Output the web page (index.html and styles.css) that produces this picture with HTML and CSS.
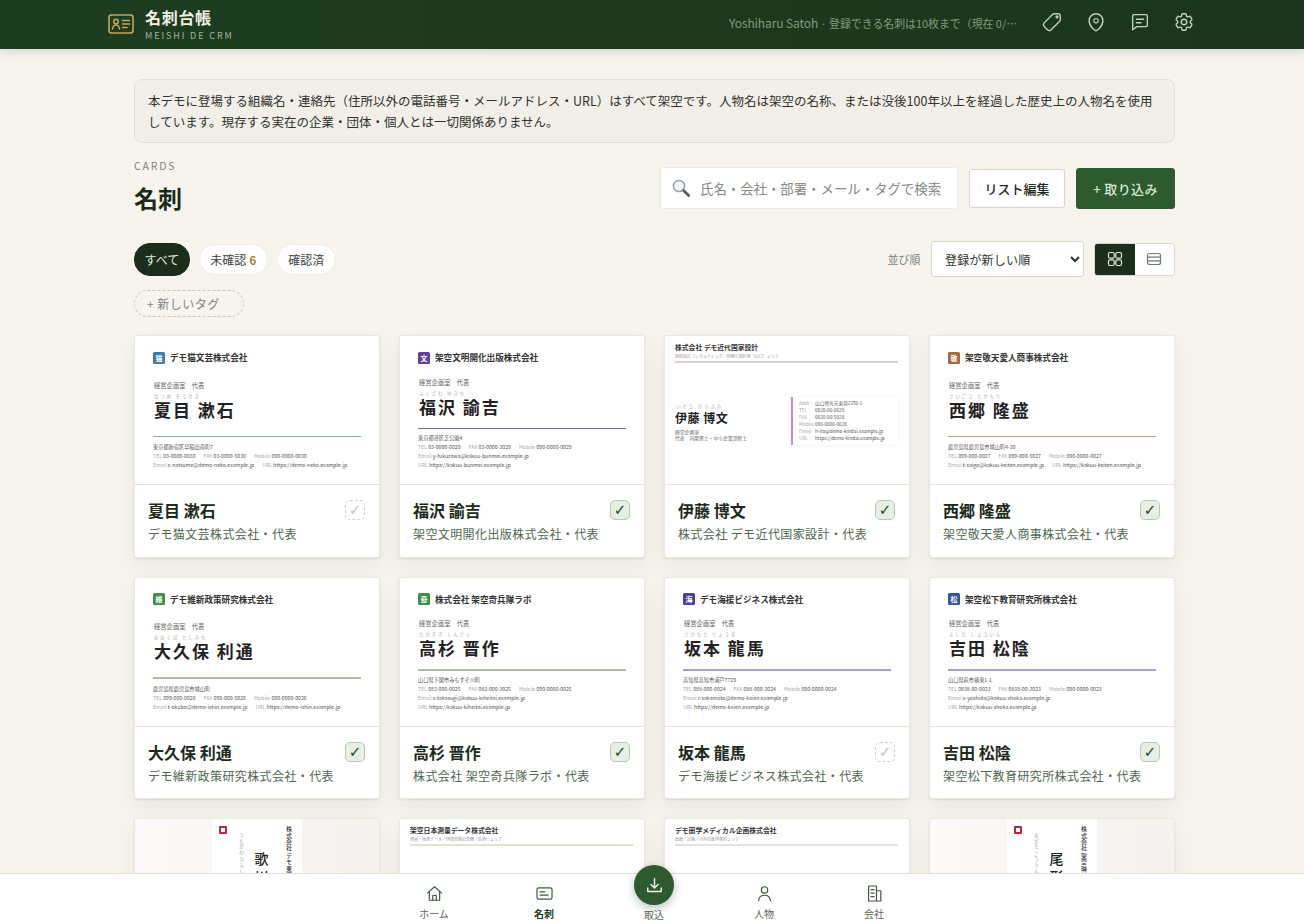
FILE: index.html
```html
<!DOCTYPE html>
<html lang="ja">
<head>
    <meta charset="UTF-8">
    <meta name="viewport" content="width=device-width, initial-scale=1.0">
    <title>名刺台帳</title>
    <link rel="stylesheet" href="styles.css">
</head>
<body>
<div class="app">

    <!-- Header -->
    <header class="topbar">
        <div class="brand">
            <svg class="brand-icon" viewBox="0 0 26 20" fill="none" stroke="currentColor" stroke-width="1.6" stroke-linecap="round" stroke-linejoin="round">
                <rect x="1" y="1" width="24" height="18" rx="2.5"/>
                <circle cx="8" cy="7.5" r="2.3"/>
                <path d="M4.5 15c.3-2.6 1.8-4 3.5-4s3.200 1.400 3.500 4"/>
                <path d="M14.500 6.500h7M14.500 10h7M14.500 13.500h4.500"/>
            </svg>
            <div>
                <div class="brand-name">名刺台帳</div>
                <div class="brand-sub">MEISHI DE CRM</div>
            </div>
        </div>
        <div class="user-note"><span class="user-name">Yoshiharu Satoh</span> · 登録できる名刺は10枚まで（現在 0/10枚）</div>
        <nav class="top-icons">
            <svg viewBox="0 0 24 24"><g transform="matrix(-1 0 0 1 24 0)"><path d="M9.568 3H5.250A2.250 2.250 0 0 0 3 5.250v4.318c0 .597.237 1.170.659 1.591l9.581 9.581c.699.699 1.780.872 2.607.33a18.095 18.095 0 0 0 5.223-5.223c.542-.827.369-1.908-.33-2.607L11.160 3.660A2.250 2.250 0 0 0 9.568 3Z"/><circle cx="6.500" cy="6.500" r="1"/></g></svg>
            <svg viewBox="0 0 24 24"><path d="M15 10.500a3 3 0 1 1-6 0 3 3 0 0 1 6 0Z" transform="translate(2.400 2.100) scale(.8)"/><path d="M19.500 10.500c0 7.142-7.500 11.250-7.500 11.250S4.500 17.642 4.500 10.500a7.500 7.500 0 1 1 15 0Z"/></svg>
            <svg viewBox="0 0 24 24"><path d="M5.500 4h13A1.500 1.500 0 0 1 20 5.500v10a1.500 1.500 0 0 1-1.500 1.500H8.500L4 20.500v-15A1.500 1.500 0 0 1 5.500 4Z"/><path d="M8 9h8M8 12.800h5"/></svg>
            <svg viewBox="0 0 24 24"><path d="M9.594 3.940c.09-.542.56-.94 1.110-.94h2.593c.55 0 1.020.398 1.110.94l.213 1.281c.063.374.313.686.645.87.074.04.147.083.22.127.325.196.72.257 1.075.124l1.217-.456a1.125 1.125 0 0 1 1.370.49l1.296 2.247a1.125 1.125 0 0 1-.26 1.431l-1.003.827c-.293.241-.438.613-.43.992a7.723 7.723 0 0 1 0 .255c-.008.378.137.75.43.991l1.004.827c.424.35.534.955.26 1.430l-1.298 2.247a1.125 1.125 0 0 1-1.369.491l-1.217-.456c-.355-.133-.75-.072-1.076.124a6.470 6.470 0 0 1-.22.128c-.331.183-.581.495-.644.869l-.213 1.281c-.09.543-.56.94-1.110.94h-2.594c-.55 0-1.019-.398-1.110-.94l-.213-1.281c-.062-.374-.312-.686-.644-.87a6.520 6.520 0 0 1-.22-.127c-.325-.196-.72-.257-1.076-.124l-1.217.456a1.125 1.125 0 0 1-1.369-.49l-1.297-2.247a1.125 1.125 0 0 1 .26-1.431l1.004-.827c.292-.24.437-.613.43-.991a6.932 6.932 0 0 1 0-.255c.007-.38-.138-.751-.43-.992l-1.004-.827a1.125 1.125 0 0 1-.26-1.430l1.297-2.247a1.125 1.125 0 0 1 1.370-.491l1.216.456c.356.133.751.072 1.076-.124.072-.044.146-.086.22-.128.332-.183.582-.495.644-.869l.214-1.280Z"/><circle cx="12" cy="12" r="3"/></svg>
        </nav>
    </header>

    <main class="content">
        <div class="notice">本デモに登場する組織名・連絡先（住所以外の電話番号・メールアドレス・URL）はすべて架空です。人物名は架空の名称、または没後100年以上を経過した歴史上の人物名を使用しています。現存する実在の企業・団体・個人とは一切関係ありません。</div>

        <!-- Title and actions -->
        <div class="page-head">
            <div>
                <div class="eyebrow">CARDS</div>
                <h1>名刺</h1>
            </div>
            <div class="actions">
                <label class="search">
                    <svg viewBox="0 0 20 20"><circle cx="8" cy="8" r="5.600" fill="#f1f3f4" stroke="#9a9da0" stroke-width="1.500"/><path d="M12.500 12.500l5.200 5" stroke="#55585b" stroke-width="2.600" stroke-linecap="round"/></svg>
                    <input type="text" placeholder="氏名・会社・部署・メール・タグで検索">
                </label>
                <button class="btn">リスト編集</button>
                <button class="btn btn-primary">+ 取り込み</button>
            </div>
        </div>

        <!-- Filters -->
        <div class="filters">
            <div class="filter-left">
                <div class="pills">
                    <span class="pill pill-active">すべて</span>
                    <span class="pill">未確認 <b class="count">6</b></span>
                    <span class="pill">確認済</span>
                </div>
                <span class="new-tag">+ 新しいタグ</span>
            </div>
            <div class="filter-right">
                <span class="sort-label">並び順</span>
                <select class="sort">
                    <option>登録が新しい順</option>
                </select>
                <div class="view-toggle">
                    <span class="view-btn view-active"><svg viewBox="0 0 16 16"><rect x="1.500" y="1.500" width="5.700" height="5.700" rx="1.500"/><rect x="8.800" y="1.500" width="5.700" height="5.700" rx="1.500"/><rect x="1.500" y="8.800" width="5.700" height="5.700" rx="1.500"/><rect x="8.800" y="8.800" width="5.700" height="5.700" rx="1.500"/></svg></span>
                    <span class="view-btn"><svg viewBox="0 0 16 16"><rect x="1.500" y="2.500" width="13" height="11" rx="2"/><path d="M1.500 6.200h13M1.500 9.800h13"/></svg></span>
                </div>
            </div>
        </div>

        <div class="card-grid">

            <!-- Row 1 -->
            <article class="card">
                <div class="preview biz">
                    <div class="biz-head"><span class="biz-logo logo-blue">猫</span>デモ猫文芸株式会社</div>
                    <div class="biz-body">
                        <div class="biz-title">経営企画室　代表</div>
                        <div class="biz-kana">なつめ そうせき</div>
                        <div class="biz-name">夏目 漱石</div>
                        <div class="biz-line line-blue"></div>
                        <div class="biz-addr">東京都新宿区早稲田南町7</div>
                        <div class="biz-row"><span><i>TEL</i> 03-0000-0030</span><span><i>FAX</i> 03-0000-5030</span><span><i>Mobile</i> 090-0000-0030</span></div>
                        <div class="biz-row"><span><i>Email</i> s-natsume@demo-neko.example.jp</span><span><i>URL</i> https://demo-neko.example.jp</span></div>
                    </div>
                </div>
                <div class="meta">
                    <div class="meta-top"><span class="person">夏目 漱石</span><span class="check check-off">✓</span></div>
                    <div class="org">デモ猫文芸株式会社・代表</div>
                </div>
            </article>

            <article class="card">
                <div class="preview biz biz-tight">
                    <div class="biz-head"><span class="biz-logo logo-purple">文</span>架空文明開化出版株式会社</div>
                    <div class="biz-body">
                        <div class="biz-title">経営企画室　代表</div>
                        <div class="biz-kana">ふくざわ ゆきち</div>
                        <div class="biz-name">福沢 諭吉</div>
                        <div class="biz-line line-purple"></div>
                        <div class="biz-addr">東京都港区芝公園4</div>
                        <div class="biz-row"><span><i>TEL</i> 03-0000-0029</span><span><i>FAX</i> 03-0000-3029</span><span><i>Mobile</i> 090-0000-0029</span></div>
                        <div class="biz-row"><span><i>Email</i> y-fukuzawa@kakuu-bunmei.example.jp</span></div>
                        <div class="biz-row"><span><i>URL</i> https://kakuu-bunmei.example.jp</span></div>
                    </div>
                </div>
                <div class="meta">
                    <div class="meta-top"><span class="person">福沢 諭吉</span><span class="check">✓</span></div>
                    <div class="org">架空文明開化出版株式会社・代表</div>
                </div>
            </article>

            <article class="card">
                <div class="preview modern">
                    <div class="modern-org">株式会社 デモ近代国家設計</div>
                    <div class="modern-sub">制度設計コンサルティング／伊藤公資料室（山口）ミリア</div>
                    <div class="modern-line line-pink"></div>
                    <div class="modern-body">
                        <div class="modern-person">
                            <div class="biz-kana">いとう ひろぶみ</div>
                            <div class="modern-name">伊藤 博文</div>
                            <div class="modern-dept">経営企画室</div>
                            <div class="modern-dept">代表　内閣書士・中小企業診断士</div>
                        </div>
                        <div class="modern-box">
                            <div><i>Addr</i>山口県光市束荷2250-1</div>
                            <div><i>TEL</i>0820-00-0028</div>
                            <div><i>FAX</i>0820-00-5028</div>
                            <div><i>Mobile</i>090-0000-0028</div>
                            <div><i>Email</i>h-ito@demo-kindai.example.jp</div>
                            <div><i>URL</i>https://demo-kindai.example.jp</div>
                        </div>
                    </div>
                </div>
                <div class="meta">
                    <div class="meta-top"><span class="person">伊藤 博文</span><span class="check">✓</span></div>
                    <div class="org">株式会社 デモ近代国家設計・代表</div>
                </div>
            </article>

            <article class="card">
                <div class="preview biz">
                    <div class="biz-head"><span class="biz-logo logo-brown">敬</span>架空敬天愛人商事株式会社</div>
                    <div class="biz-body">
                        <div class="biz-title">経営企画室　代表</div>
                        <div class="biz-kana">さいごう たかもり</div>
                        <div class="biz-name">西郷 隆盛</div>
                        <div class="biz-line line-brown"></div>
                        <div class="biz-addr">鹿児島県鹿児島市城山町4-30</div>
                        <div class="biz-row"><span><i>TEL</i> 099-000-0027</span><span><i>FAX</i> 099-000-5027</span><span><i>Mobile</i> 090-0000-0027</span></div>
                        <div class="biz-row"><span><i>Email</i> t-saigo@kakuu-keiten.example.jp</span><span><i>URL</i> https://kakuu-keiten.example.jp</span></div>
                    </div>
                </div>
                <div class="meta">
                    <div class="meta-top"><span class="person">西郷 隆盛</span><span class="check">✓</span></div>
                    <div class="org">架空敬天愛人商事株式会社・代表</div>
                </div>
            </article>

            <!-- Row 2 -->
            <article class="card">
                <div class="preview biz">
                    <div class="biz-head"><span class="biz-logo logo-green">維</span>デモ維新政策研究株式会社</div>
                    <div class="biz-body">
                        <div class="biz-title">経営企画室　代表</div>
                        <div class="biz-kana">おおくぼ としみち</div>
                        <div class="biz-name">大久保 利通</div>
                        <div class="biz-line line-green"></div>
                        <div class="biz-addr">鹿児島県鹿児島市城山町</div>
                        <div class="biz-row"><span><i>TEL</i> 099-000-0026</span><span><i>FAX</i> 099-000-5026</span><span><i>Mobile</i> 090-0000-0026</span></div>
                        <div class="biz-row"><span><i>Email</i> t-okubo@demo-ishin.example.jp</span><span><i>URL</i> https://demo-ishin.example.jp</span></div>
                    </div>
                </div>
                <div class="meta">
                    <div class="meta-top"><span class="person">大久保 利通</span><span class="check">✓</span></div>
                    <div class="org">デモ維新政策研究株式会社・代表</div>
                </div>
            </article>

            <article class="card">
                <div class="preview biz biz-tight">
                    <div class="biz-head"><span class="biz-logo logo-green">奇</span>株式会社 架空奇兵隊ラボ</div>
                    <div class="biz-body">
                        <div class="biz-title">経営企画室　代表</div>
                        <div class="biz-kana">たかすぎ しんさく</div>
                        <div class="biz-name">高杉 晋作</div>
                        <div class="biz-line line-green"></div>
                        <div class="biz-addr">山口県下関市みもすそ川町</div>
                        <div class="biz-row"><span><i>TEL</i> 083-000-0025</span><span><i>FAX</i> 083-000-3025</span><span><i>Mobile</i> 090-0000-0025</span></div>
                        <div class="biz-row"><span><i>Email</i> s-takasugi@kakuu-kiheitai.example.jp</span></div>
                        <div class="biz-row"><span><i>URL</i> https://kakuu-kiheitai.example.jp</span></div>
                    </div>
                </div>
                <div class="meta">
                    <div class="meta-top"><span class="person">高杉 晋作</span><span class="check">✓</span></div>
                    <div class="org">株式会社 架空奇兵隊ラボ・代表</div>
                </div>
            </article>

            <article class="card">
                <div class="preview biz biz-tight">
                    <div class="biz-head"><span class="biz-logo logo-indigo">海</span>デモ海援ビジネス株式会社</div>
                    <div class="biz-body">
                        <div class="biz-title">経営企画室　代表</div>
                        <div class="biz-kana">さかもと りょうま</div>
                        <div class="biz-name">坂本 龍馬</div>
                        <div class="biz-line line-indigo"></div>
                        <div class="biz-addr">高知県高知市浦戸7729</div>
                        <div class="biz-row"><span><i>TEL</i> 088-000-0024</span><span><i>FAX</i> 088-000-3024</span><span><i>Mobile</i> 090-0000-0024</span></div>
                        <div class="biz-row"><span><i>Email</i> r-sakamoto@demo-kaien.example.jp</span></div>
                        <div class="biz-row"><span><i>URL</i> https://demo-kaien.example.jp</span></div>
                    </div>
                </div>
                <div class="meta">
                    <div class="meta-top"><span class="person">坂本 龍馬</span><span class="check check-off">✓</span></div>
                    <div class="org">デモ海援ビジネス株式会社・代表</div>
                </div>
            </article>

            <article class="card">
                <div class="preview biz biz-tight">
                    <div class="biz-head"><span class="biz-logo logo-navy">松</span>架空松下教育研究所株式会社</div>
                    <div class="biz-body">
                        <div class="biz-title">経営企画室　代表</div>
                        <div class="biz-kana">よしだ しょういん</div>
                        <div class="biz-name">吉田 松陰</div>
                        <div class="biz-line line-indigo"></div>
                        <div class="biz-addr">山口県萩市椿東1-1</div>
                        <div class="biz-row"><span><i>TEL</i> 0838-00-0023</span><span><i>FAX</i> 0838-00-3023</span><span><i>Mobile</i> 090-0000-0023</span></div>
                        <div class="biz-row"><span><i>Email</i> s-yoshida@kakuu-shoka.example.jp</span></div>
                        <div class="biz-row"><span><i>URL</i> https://kakuu-shoka.example.jp</span></div>
                    </div>
                </div>
                <div class="meta">
                    <div class="meta-top"><span class="person">吉田 松陰</span><span class="check">✓</span></div>
                    <div class="org">架空松下教育研究所株式会社・代表</div>
                </div>
            </article>

            <!-- Row 3, runs under the bottom nav -->
            <article class="card">
                <div class="preview tate-wrap">
                    <div class="tate">
                        <span class="tate-logo"></span>
                        <div class="tate-org">株式会社 デモ東海道</div>
                        <div class="tate-name">歌川 広重</div>
                        <div class="tate-kana">うたがわ ひろしげ</div>
                    </div>
                </div>
            </article>

            <article class="card">
                <div class="preview modern">
                    <div class="modern-org">架空日本測量データ株式会社</div>
                    <div class="modern-sub">測量・地理データ／伊能忠敬記念館（佐原）ミリア</div>
                    <div class="modern-line line-olive"></div>
                </div>
            </article>

            <article class="card">
                <div class="preview modern">
                    <div class="modern-org">デモ蘭学メディカル企画株式会社</div>
                    <div class="modern-sub">医療・出版／小浜の医学資料ミリア</div>
                    <div class="modern-line line-stone"></div>
                </div>
            </article>

            <article class="card">
                <div class="preview tate-wrap">
                    <div class="tate">
                        <span class="tate-logo"></span>
                        <div class="tate-org">株式会社 架空琳派意匠</div>
                        <div class="tate-name">尾形 光琳</div>
                        <div class="tate-kana">おがた こうりん</div>
                    </div>
                </div>
            </article>
        </div>
    </main>

    <!-- Bottom nav -->
    <nav class="bottom-nav">
        <a class="nav-item">
            <svg viewBox="0 0 24 24"><path d="M3 11.500L12 3.500l9 8"/><path d="M5.500 9.500V20.500h13V9.500"/><path d="M9.800 20.500v-6h4.400v6"/></svg>
            <span>ホーム</span>
        </a>
        <a class="nav-item nav-active">
            <svg viewBox="0 0 24 24"><rect x="2.500" y="5" width="19" height="14" rx="2"/><path d="M6.500 10h6M6.500 14h10"/></svg>
            <span>名刺</span>
        </a>
        <a class="nav-item nav-fab">
            <span class="fab"><svg viewBox="0 0 24 24"><path d="M12 3.500v11.500M7.500 10.800L12 15.200l4.500-4.400"/><path d="M3.500 15v4.500h17V15"/></svg></span>
            <span>取込</span>
        </a>
        <a class="nav-item">
            <svg viewBox="0 0 24 24"><circle cx="12" cy="7.500" r="4"/><path d="M4.500 21c.5-4.500 3.500-6.800 7.500-6.800s7 2.300 7.500 6.800"/></svg>
            <span>人物</span>
        </a>
        <a class="nav-item">
            <svg viewBox="0 0 24 24"><path d="M4.500 2.500h10v19h-10z"/><path d="M14.500 8.500h5.500v13h-5.500"/><path d="M7.500 7h4M7.500 11.500h4M7.500 16h4"/></svg>
            <span>会社</span>
        </a>
    </nav>
</div>
</body>
</html>
```

FILE: styles.css
```css
* {
    box-sizing: border-box;
}

html, body {
    margin: 0;
    height: 100%;
}

body {
    font-family: "Noto Sans CJK JP", "Noto Sans", sans-serif;
    background-color: #f7f4ee;
    color: #1f2a1f;
}

.app {
    display: flex;
    flex-direction: column;
    height: 100vh;
    overflow: hidden;
}

/* Header */
.topbar {
    flex: none;
    height: 49px;
    display: flex;
    align-items: center;
    padding: 0 109px 0 108px;
    background: linear-gradient(90deg, #1e3d20, #1a351b);
    box-shadow: 0 2px 10px rgba(60, 50, 30, 0.18);
    position: relative;
    z-index: 2;
}

.brand {
    display: flex;
    align-items: center;
    gap: 11px;
}

.brand-icon {
    width: 26px;
    height: 20px;
    margin-bottom: 2px;
    color: #c4a55c;
}

.brand-name {
    color: #f3f1e6;
    font-size: 16px;
    font-weight: 700;
    letter-spacing: 0.7px;
    line-height: 18px;
    margin-bottom: 4px;
}

.brand-sub {
    color: #a5b5a0;
    font-size: 9px;
    letter-spacing: 1.900px;
    line-height: 12px;
}

.user-note {
    margin-left: auto;
    margin-bottom: 4px;
    width: 290px;
    color: #7f9b7f;
    font-size: 10.900px;
    white-space: nowrap;
    overflow: hidden;
    text-overflow: ellipsis;
}

.user-name {
    font-size: 12px;
    letter-spacing: -0.1px;
}

.top-icons {
    display: flex;
    gap: 22px;
    margin-left: 22px;
    margin-bottom: 5px;
}

.top-icons svg {
    width: 22px;
    height: 22px;
    fill: none;
    stroke: #c3d0be;
    stroke-width: 1.500;
    stroke-linejoin: round;
    stroke-linecap: round;
}

/* Content area */
.content {
    flex: 1;
    min-height: 0;
    overflow: hidden;
    padding: 30px 129px 0 134px;
}

.notice {
    background-color: #f2efe9;
    border: 1px solid #e2dfd7;
    border-radius: 8px;
    padding: 10px 20px 10px 13px;
    font-size: 12.500px;
    line-height: 21px;
    color: #2c332c;
    min-height: 64px;
}

.page-head {
    display: flex;
    justify-content: space-between;
    align-items: flex-start;
    margin-top: 15px;
}

.eyebrow {
    font-size: 10.500px;
    letter-spacing: 1.800px;
    line-height: 16px;
    color: #7c857a;
}

h1 {
    margin: 7px 0 0;
    font-size: 24px;
    line-height: 34px;
    font-weight: 700;
    color: #1c2a1c;
}

.actions {
    display: flex;
    align-items: center;
    gap: 11px;
    margin-top: 9px;
}

.search {
    width: 298px;
    height: 42px;
    display: flex;
    align-items: center;
    gap: 9px;
    padding: 0 14px 0 10px;
    background-color: #fff;
    border: 1px solid #eeebe4;
    border-radius: 3px;
}

.search svg {
    flex: none;
    width: 20px;
    height: 20px;
}

.search input {
    flex: 1;
    min-width: 0;
    border: 0;
    outline: 0;
    padding: 0;
    font-family: inherit;
    font-size: 13.400px;
    background: transparent;
}

.search input::placeholder {
    color: #858a85;
}

.btn {
    width: 96px;
    height: 39px;
    padding: 0;
    font-family: inherit;
    font-size: 13px;
    font-weight: 500;
    color: #1f2a1f;
    background-color: #fff;
    border: 1px solid #d9d6ce;
    border-radius: 3px;
}

.btn-primary {
    height: 41px;
    width: 99px;
    letter-spacing: 0.4px;
    color: #d9e5d3;
    background-color: #2d5a2f;
    border-color: #2d5a2f;
}

/* Filters */
.filters {
    display: flex;
    justify-content: space-between;
    align-items: flex-start;
    margin-top: 28px;
}

.pills {
    display: flex;
    align-items: center;
    gap: 9px;
    height: 33px;
}

.pill {
    height: 31px;
    padding: 0 10.500px;
    display: flex;
    align-items: center;
    gap: 3px;
    font-size: 12px;
    color: #3b443b;
    background-color: #fff;
    border: 1px solid #f0ede6;
    border-radius: 16px;
}

.pill-active {
    height: 33px;
    padding: 0 9.500px;
    color: #e6ebdf;
    background-color: #1a2e1b;
    border-color: #1a2e1b;
}

.count {
    color: #b57f35;
    font-weight: 700;
}

.new-tag {
    display: inline-flex;
    align-items: center;
    height: 27px;
    width: 110px;
    margin-top: 14px;
    padding: 0 12px;
    font-size: 12px;
    letter-spacing: 0.5px;
    color: #7f867f;
    border: 1px dashed #c9c6be;
    border-radius: 14px;
}

.filter-right {
    display: flex;
    align-items: center;
    margin-top: -2px;
}

.sort-label {
    font-size: 11px;
    color: #7c857a;
    margin-right: 10.500px;
}

.sort {
    width: 153px;
    height: 36px;
    padding: 0 0 0 9px;
    font-family: inherit;
    font-size: 12px;
    letter-spacing: 0.2px;
    color: #2c332c;
    background-color: #fff;
    border: 1px solid #d9d6ce;
    border-radius: 3px;
}

.view-toggle {
    display: flex;
    margin-left: 10px;
    background-color: #fff;
    border: 1px solid #d9d6ce;
    border-radius: 3px;
    overflow: hidden;
}

.view-btn {
    width: 39.500px;
    height: 31px;
    display: flex;
    align-items: center;
    justify-content: center;
}

.view-btn svg {
    width: 16px;
    height: 16px;
    fill: none;
    stroke: #6f7b6f;
    stroke-width: 1.200;
}

.view-active {
    background-color: #1a2e1b;
}

.view-active svg {
    stroke: #dfe6d8;
}

/* Card grid */
.card-grid {
    display: grid;
    grid-template-columns: repeat(4, 1fr);
    gap: 19px;
    margin-top: 18px;
}

.card {
    background-color: #fff;
    border: 1px solid #ebe8e1;
    border-radius: 3px;
    box-shadow: 0 1px 2px rgba(40, 35, 20, 0.1), 0 10px 22px rgba(40, 35, 20, 0.06);
    overflow: hidden;
}

.preview {
    height: 149px;
    border-bottom: 1px solid #e6e3dc;
}

.meta {
    padding: 14px 14px 0 13px;
    height: 71.500px;
}

.meta-top {
    display: flex;
    justify-content: space-between;
    align-items: center;
    height: 22px;
}

.person {
    font-size: 16px;
    font-weight: 700;
    color: #1c2a1c;
}

.check {
    width: 20px;
    height: 20px;
    display: flex;
    align-items: center;
    justify-content: center;
    font-family: "DejaVu Sans", sans-serif;
    font-size: 15px;
    color: #234a25;
    background-color: #e6eee5;
    border: 1px solid #b9c8b8;
    border-radius: 5px;
}

.check-off {
    color: #c4c4c0;
    background-color: #fff;
    border: 1px dashed #cfcfca;
}

.org {
    margin-top: 3px;
    font-size: 12px;
    letter-spacing: 0.4px;
    line-height: 20px;
    color: #4f6650;
}

/* Business card, standard layout */
.biz {
    display: flex;
    flex-direction: column;
    padding: 15px 18px 15px;
}

.biz-head {
    display: flex;
    align-items: center;
    gap: 5px;
    font-size: 8.600px;
    font-weight: 700;
    color: #333;
    line-height: 13px;
}

.biz-logo {
    flex: none;
    width: 12px;
    height: 12px;
    border-radius: 1.500px;
    color: #fff;
    font-size: 7px;
    line-height: 12px;
    text-align: center;
}

.logo-blue { background-color: #3f7ba3; }
.logo-purple { background-color: #63409a; }
.logo-brown { background-color: #a5693a; }
.logo-green { background-color: #3f8f48; }
.logo-indigo { background-color: #4a3f9e; }
.logo-navy { background-color: #35549c; }

.biz-body {
    margin-top: auto;
}

.biz-title {
    font-size: 6.300px;
    line-height: 9px;
    color: #666;
    padding-left: 1px;
}

.biz-kana {
    font-size: 4.600px;
    line-height: 7px;
    letter-spacing: 1.700px;
    margin-top: 3px;
    color: #aaa;
    padding-left: 1px;
}

.biz-name {
    font-size: 17px;
    line-height: 19px;
    font-weight: 700;
    letter-spacing: 2px;
    color: #222;
    padding-left: 1px;
}

.biz-line {
    height: 1px;
    margin: 17px 0 5px;
}

/* cards with Email and URL on separate rows sit closer to the rule */
.biz-tight .biz-line {
    margin: 12px 0 4px;
}

.line-blue { background-color: #8fb0ba; }
.line-purple { background-color: #7a6a90; }
.line-brown { background-color: #b8a48f; }
.line-green { background-color: #a9bd9f; height: 2px; }
.line-indigo { background-color: #a3a1c4; height: 2px; }
.line-pink { background-color: #e2c8dc; }
.line-olive { background-color: #e3e2d2; }
.line-stone { background-color: #e4e2dc; }

.biz-addr,
.biz-row {
    font-size: 5.200px;
    line-height: 9px;
    color: #555;
    white-space: nowrap;
}

.biz-row {
    display: flex;
    gap: 8px;
}

.biz-row i {
    font-style: normal;
    color: #aaa;
}

/* Business card, letterhead layout */
.modern {
    display: flex;
    flex-direction: column;
    padding: 6px 11px 8px 10px;
}

.modern-org {
    font-size: 6.800px;
    line-height: 11px;
    font-weight: 700;
    color: #333;
}

.modern-sub {
    font-size: 4px;
    line-height: 7px;
    color: #999;
}

.modern-line {
    height: 2px;
    margin-top: 1px;
}

.modern-body {
    display: flex;
    justify-content: space-between;
    align-items: center;
    flex: 1;
    padding-top: 2px;
}

.modern-name {
    font-size: 12px;
    line-height: 16px;
    font-weight: 700;
    letter-spacing: 0.5px;
    color: #222;
}

.modern-dept {
    font-size: 4.800px;
    line-height: 6px;
    color: #666;
}

.modern-dept:nth-child(3) {
    margin-top: 3px;
}

.modern-box {
    width: 107px;
    padding: 3px 0 3px 6px;
    border-left: 2px solid #c98cbb;
    box-shadow: 0 0 3px rgba(0, 0, 0, 0.06);
    font-size: 4.700px;
    line-height: 7px;
    color: #555;
    white-space: nowrap;
}

.modern-box i {
    display: inline-block;
    width: 16px;
    font-style: normal;
    color: #aaa;
}

/* Business card, vertical layout */
.tate-wrap {
    display: flex;
    justify-content: center;
    background: linear-gradient(90deg, #fbfaf8, #f4f2ed);
}

.tate {
    position: relative;
    width: 90px;
    height: 148px;
    display: flex;
    flex-direction: row-reverse;
    align-items: flex-start;
    padding: 7px 8.500px 0 0;
    background-color: #fff;
}

.tate-logo {
    position: absolute;
    left: 7px;
    top: 7px;
    width: 8px;
    height: 8px;
    border: 2.500px solid #b5293c;
    border-radius: 1px;
    background-color: #fff;
}

.tate-org,
.tate-name,
.tate-kana {
    writing-mode: vertical-rl;
    white-space: nowrap;
}

.tate-org {
    font-size: 6px;
    letter-spacing: 0.3px;
    font-weight: 500;
    color: #333;
}

.tate-name {
    margin-right: 13px;
    font-size: 14px;
    font-weight: 500;
    letter-spacing: 4px;
    padding-top: 26px;
    color: #222;
}

.tate-kana {
    margin-right: 7px;
    font-size: 4.600px;
    letter-spacing: 1px;
    padding-top: 7px;
    color: #999;
}

/* Bottom nav */
.bottom-nav {
    flex: none;
    height: 51px;
    display: flex;
    justify-content: center;
    padding-left: 4px;
    background-color: #fff;
    border-top: 1px solid #e3e0d9;
    position: relative;
    z-index: 2;
}

.nav-item {
    width: 110px;
    display: flex;
    flex-direction: column;
    align-items: center;
    padding-top: 10px;
    font-size: 10px;
    line-height: 15px;
    color: #5b655b;
}

.nav-item svg {
    width: 19px;
    height: 19px;
    margin-bottom: 3px;
    fill: none;
    stroke: #3f5a41;
    stroke-width: 1.500;
    stroke-linecap: round;
    stroke-linejoin: round;
}

.nav-active {
    color: #1f3a20;
    font-weight: 700;
}

.nav-fab {
    position: relative;
    padding-top: 33px;
}

.fab {
    position: absolute;
    top: -9px;
    left: 35px;
    width: 40px;
    height: 40px;
    display: flex;
    align-items: center;
    justify-content: center;
    background-color: #2d5a2f;
    border-radius: 50%;
    box-shadow: 0 3px 10px rgba(30, 50, 30, 0.3);
}

.fab svg {
    margin: 0;
    stroke: #eef2e8;
    stroke-width: 1.800;
}
```
